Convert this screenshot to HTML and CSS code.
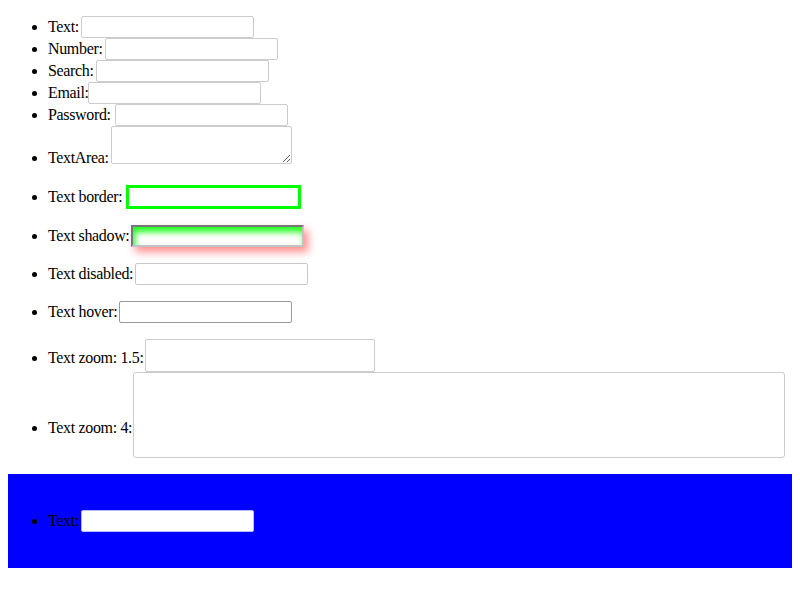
FILE: index.html
```html
<!DOCTYPE html>
<html>
<head>
<meta charset="utf-8">
<link rel="stylesheet" href="styles.css">
</head>
<body>
<ul class="group">
  <li><span class="row"><span class="label">Text:</span><input class="field" type="text"></span></li>
  <li><span class="row"><span class="label">Number:</span><input class="field" type="text"></span></li>
  <li><span class="row"><span class="label">Search:</span><input class="field" type="text"></span></li>
  <li><span class="row"><span class="label">Email:</span><input class="field nudge-l3" type="text"></span></li>
  <li><span class="row"><span class="label">Password:</span><input class="field nudge-r2" type="password"></span></li>
  <li><span class="row row-area"><span class="label">TextArea:</span><textarea class="area"></textarea></span></li>
</ul>
<ul class="group">
  <li><span class="row row-border"><span class="label">Text border:</span><input class="field field-border nudge-r2" type="text"></span></li>
</ul>
<ul class="group">
  <li><span class="row"><span class="label">Text shadow:</span><input class="field field-shadow" type="text"></span></li>
</ul>
<ul class="group">
  <li><span class="row"><span class="label">Text disabled:</span><input class="field field-disabled" type="text" disabled></span></li>
</ul>
<ul class="group">
  <li><span class="row"><span class="label">Text hover:</span><input class="field field-hover" type="text"></span></li>
</ul>
<ul class="group">
  <li><span class="row row-zoom15"><span class="label">Text zoom: 1.5:</span><input class="field field-zoom15 nudge-l1" type="text"></span></li>
  <li><span class="row row-zoom4"><span class="label">Text zoom: 4:</span><input class="field field-zoom4 nudge-l1" type="text"></span></li>
</ul>
<div class="blue">
  <ul class="group">
    <li><span class="row"><span class="label">Text:</span><input class="field field-blue" type="text"></span></li>
  </ul>
</div>
</body>
</html>
```
FILE: styles.css
```css
html, body {
  background: #ffffff;
}
body {
  margin: 0 8px 8px;
  font-family: "Liberation Serif", "Times New Roman", serif;
  font-size: 16px;
  color: #000000;
}
.group {
  margin: 16px 0;
  padding-left: 40px;
}
.row {
  display: inline-flex;
  align-items: center;
  gap: 2px;
}
.label {
  white-space: nowrap;
  letter-spacing: -0.34px;
}
.field {
  box-sizing: border-box;
  width: 173px;
  height: 22px;
  margin: 0;
  padding: 1px 2px;
  border: 1px solid #cccccc;
  border-radius: 2px;
  background: #ffffff;
  font: 13.33px "Liberation Sans", Arial, sans-serif;
  outline: none;
}
.nudge-l3 {
  margin-left: -3px;
}
.nudge-l1 {
  margin-left: -1px;
}
.nudge-r2 {
  margin-left: 2px;
}
.area {
  box-sizing: border-box;
  width: 181px;
  height: 38px;
  margin: 0;
  padding: 2px;
  border: 1px solid #cccccc;
  border-radius: 2px;
  background: #ffffff;
  font: 13.33px "Liberation Mono", monospace;
}
.row-area {
  align-items: flex-end;
}
.row-area .label {
  margin-bottom: -3px;
}
.row-border {
  padding-top: 2px;
}
.field-border {
  width: 175px;
  height: 24px;
  border: 3px solid #00ff00;
  border-radius: 0;
}
.field-shadow {
  border: 2px solid;
  border-color: #767676 #c3c3c3 #c3c3c3 #767676;
  border-radius: 0;
  box-shadow: 4px 5px 9px rgba(255, 0, 0, 0.45), inset 2px 5px 6px rgba(0, 255, 0, 0.9);
}
.field-disabled {
  border-color: #c8c8c8;
}
.field-hover {
  border-color: #9a9a9a;
}
.field-zoom15 {
  width: 230px;
  height: 33px;
}
.row-zoom15 .label {
  margin-top: 4px;
}
.row-zoom4 {
  align-items: flex-start;
}
.row-zoom4 .label {
  margin-top: 47px;
}
.field-zoom4 {
  width: 652px;
  height: 86px;
  border-width: 1px;
  border-radius: 3px;
}
.blue {
  background: #0000ff;
  padding: 20px 0;
}
.field-blue {
  border-color: #b8b8ff;
}
```
